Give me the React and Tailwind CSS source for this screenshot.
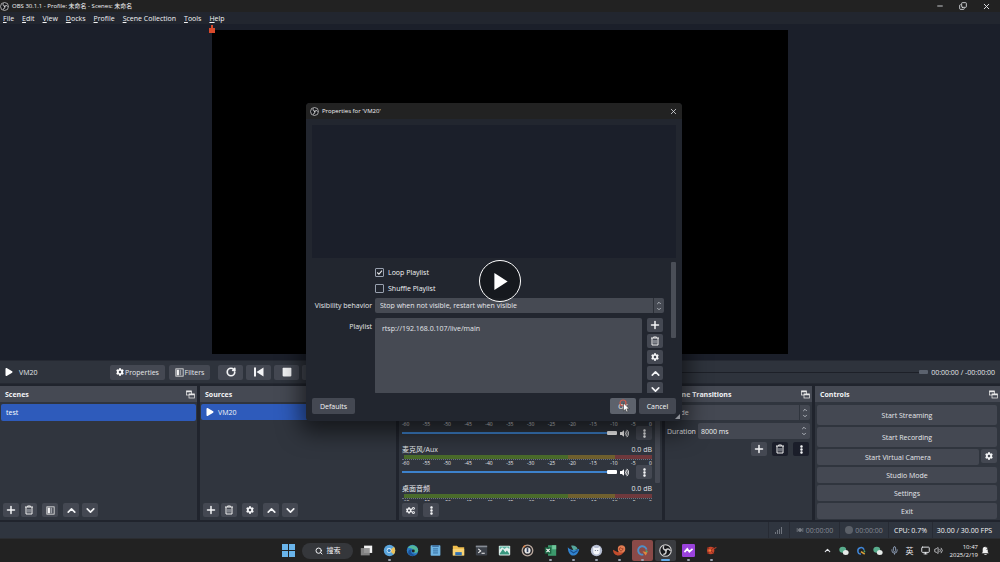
import { useState } from "react"
import clsx from "clsx"
import {
  ChevronDown,
  ChevronUp,
  Copy,
  Mic,
  Minus,
  Monitor,
  Plus,
  RotateCw,
  Search,
  Volume2,
  X,
} from "lucide-react"
import { FaCog, FaCogs, FaEllipsisV, FaPlay, FaStop, FaVolumeUp } from "react-icons/fa"

const MENUS = ["File", "Edit", "View", "Docks", "Profile", "Scene Collection", "Tools", "Help"]
const TICKS = [-60, -55, -50, -45, -40, -35, -30, -25, -20, -15, -10, -5, 0]

function ObsLogo({ className }) {
  return (
    <svg viewBox="0 0 24 24" className={className}>
      <circle cx="12" cy="12" r="10.6" fill="#17181c" stroke="#d4d4d4" strokeWidth="2" />
      <g fill="none" stroke="#cfcfcf" strokeWidth="2.6" strokeLinecap="round">
        <path d="M12.5 11.5C8.500 11 7 8 8.500 5" />
        <path d="M12.500 11.500c2.500-3 6-3 8 .2" />
        <path d="M12.500 11.500c1.500 3.500 0 6.800-3.500 7.500" />
      </g>
      <circle cx="12.500" cy="11.700" r="2" fill="#cfcfcf" />
    </svg>
  )
}

function FilterIcon({ className }) {
  return (
    <svg viewBox="0 0 16 16" className={className}>
      <rect x="1.500" y="1.500" width="13" height="13" fill="none" stroke="#e5e5e5" strokeWidth="1.500" />
      <rect x="3" y="3" width="4" height="10" fill="#f3f3f3" />
      <rect x="8" y="3" width="3" height="10" fill="#9a9da4" />
    </svg>
  )
}

function PopOutIcon() {
  return (
    <svg viewBox="0 0 18 18" className="h-[9px] w-[9px]" fill="none" stroke="#e8e8e8">
      <rect x="1" y="2" width="10" height="8" strokeWidth="1.500" />
      <path d="M1 3h10" strokeWidth="3" />
      <rect x="6" y="8" width="11" height="8" fill="#464a54" strokeWidth="1.500" />
      <path d="M6 9h11" strokeWidth="3" />
    </svg>
  )
}

function TrashIcon() {
  return (
    <svg viewBox="0 0 20 20" className="h-[10px] w-[10px]" fill="none" stroke="#f0f0f0" strokeWidth="2">
      <path d="M2 4h16M7 3.500V2h6v1.500" />
      <path d="M4 4v14h12V4" />
      <path d="M8 8v7M12 8v7" stroke="#b9bcc2" />
    </svg>
  )
}

function PrevIcon() {
  return (
    <svg viewBox="0 0 20 20" className="h-[10px] w-[10px]" fill="currentColor">
      <path d="M0 1h4v18H0zM19 1v18L5 10z" />
    </svg>
  )
}

function PlusIcon() {
  return <Plus className="h-3 w-3" strokeWidth={3} />
}

function UpIcon() {
  return <ChevronUp className="h-[13px] w-[13px]" strokeWidth={3} />
}

function DownIcon() {
  return <ChevronDown className="h-[13px] w-[13px]" strokeWidth={3} />
}

function ToolButton({ label, dark, className, children }) {
  return (
    <button
      aria-label={label}
      className={clsx(
        "flex h-[14px] w-4 shrink-0 items-center justify-center rounded-xs text-gray-100",
        dark ? "bg-[#1b1e2a]" : "bg-[#444852]",
        className
      )}
    >
      {children}
    </button>
  )
}

function Dock({ title, children }) {
  return (
    <section className="flex min-w-0 flex-col overflow-hidden bg-[#30353e]">
      <header className="flex h-4 shrink-0 items-center justify-between bg-[#454953] pr-[2px] pl-[5px]">
        <h2 className="font-bold whitespace-nowrap text-gray-100">{title}</h2>
        <button aria-label={`Undock ${title}`}>
          <PopOutIcon />
        </button>
      </header>
      {children}
    </section>
  )
}

function MixerChannel({ name }) {
  return (
    <div className="pb-[3px]">
      <div className="flex h-3 items-center justify-between text-gray-200">
        {name && (
          <>
            <span>{name}</span>
            <span>0.0 dB</span>
          </>
        )}
      </div>
      <div className="ml-[2px] flex h-1">
        <div className="w-[66%] bg-[#4a6b2b]" />
        <div className="w-[19%] bg-[#70602f]" />
        <div className="flex-1 bg-[#6f393d]" />
      </div>
      <div className="flex h-[6px] justify-between border-t border-dotted border-gray-500 text-[5px] leading-[6px] text-gray-200">
        {TICKS.map((t) => (
          <span key={t}>{t}</span>
        ))}
      </div>
      <div className="flex h-[14px] items-center">
        <div className="flex flex-1 items-center">
          <div className="h-[2px] flex-1 bg-[#3d82cc]" />
          <div className="h-1 w-[10px] rounded-[1px] bg-white" />
        </div>
        <button aria-label="Mute" className="ml-[3px] text-white">
          <FaVolumeUp className="h-[9px] w-[9px]" />
        </button>
        <ToolButton label="Channel options" className="ml-[7px]">
          <FaEllipsisV className="h-[9px] w-[9px]" />
        </ToolButton>
      </div>
    </div>
  )
}

function Spinner() {
  return (
    <span className="pointer-events-none flex flex-col items-center text-gray-300">
      <ChevronUp className="h-[6px] w-[6px]" strokeWidth={3} />
      <ChevronDown className="h-[6px] w-[6px]" strokeWidth={3} />
    </span>
  )
}

function PropertiesDialog() {
  const [loop, setLoop] = useState(true)
  const [shuffle, setShuffle] = useState(false)

  const options = [
    { id: "loop", label: "Loop Playlist", checked: loop, set: setLoop },
    { id: "shuffle", label: "Shuffle Playlist", checked: shuffle, set: setShuffle },
  ]

  return (
    <div
      role="dialog"
      aria-label="Properties for 'VM20'"
      className="absolute top-[103px] left-[306px] w-[376px] overflow-hidden rounded-sm bg-[#22262f] shadow-[0_6px_22px_6px_rgba(0,0,0,0.55)]"
    >
      <div className="flex h-4 items-center bg-[#222222] px-1 text-[6px] text-gray-100">
        <ObsLogo className="mr-[3px] h-[9px] w-[9px]" />
        <span className="flex-1">Properties for 'VM20'</span>
        <button aria-label="Close" className="text-gray-200">
          <X className="h-[9px] w-[9px]" strokeWidth={2} />
        </button>
      </div>

      <div className="mx-[6px] mt-[6px] h-[133px] bg-[#1b1f2a]" />

      {/* Scrolling form */}
      <div className="mx-[6px] flex h-[135px] justify-between overflow-hidden">
        <div className="grid w-[352px] grid-cols-[60px_1fr] content-start gap-x-[3px] pt-[6px]">
          {options.map((o) => (
            <label key={o.id} className="col-start-2 flex h-4 items-center gap-1 text-gray-100">
              <span className="relative flex">
                <input
                  type="checkbox"
                  checked={o.checked}
                  onChange={(e) => o.set(e.target.checked)}
                  className="peer h-[9px] w-[9px] appearance-none rounded-[1px] border border-gray-400"
                />
                <svg viewBox="0 0 8 8" className="pointer-events-none absolute inset-0 hidden h-[9px] w-[9px] peer-checked:block">
                  <path d="M2 4l1.500 1.500L6.200 2.400" fill="none" stroke="#e8e8e8" strokeWidth="1" />
                </svg>
              </span>
              {o.label}
            </label>
          ))}

          <label htmlFor="visibility" className="mt-[2px] flex h-[15px] items-center justify-end whitespace-nowrap text-gray-200">
            Visibility behavior
          </label>
          <div className="relative mt-[2px] flex h-[15px] rounded-xs bg-[#464a53]">
            <select id="visibility" className="h-full w-full appearance-none bg-transparent px-[5px] text-gray-200">
              <option>Stop when not visible, restart when visible</option>
            </select>
            <span className="pointer-events-none absolute inset-y-0 right-0 flex w-[11px] items-center justify-center border-l border-[#2c3038]">
              <Spinner />
            </span>
          </div>

          <span className="mt-[5px] flex h-4 items-center justify-end text-gray-200">Playlist</span>
          <div className="mt-[5px] flex justify-between">
            <ul className="h-[76px] w-[267px] rounded-xs bg-[#464a53] px-[7px] py-[6px] text-gray-200">
              <li className="leading-[10px]">rtsp://192.168.0.107/live/main</li>
            </ul>
            <div className="flex w-[17px] flex-col gap-[2px] pr-[1px]">
              <ToolButton label="Add">
                <PlusIcon />
              </ToolButton>
              <ToolButton label="Remove">
                <TrashIcon />
              </ToolButton>
              <ToolButton label="Edit">
                <FaCog className="h-2 w-2" />
              </ToolButton>
              <ToolButton label="Move up">
                <UpIcon />
              </ToolButton>
              <ToolButton label="Move down">
                <DownIcon />
              </ToolButton>
            </div>
          </div>
        </div>
        <div className="mt-1 h-[76px] w-[5px] rounded-[1px] bg-[#4a4e57]" />
      </div>

      <div className="flex gap-[3px] px-[6px] pt-[5px] pb-[7px] text-gray-100">
        <button className="mr-auto h-4 w-[43px] rounded-xs bg-[#444852]">Defaults</button>
        <button className="relative h-4 w-[26px] rounded-xs bg-[#5d626c]">
          OK
          <svg viewBox="0 0 14 14" className="absolute top-[1px] left-[8px] h-[14px] w-[14px]">
            <circle cx="5" cy="4" r="3" fill="none" stroke="#cf5a4b" strokeWidth="1.200" />
            <path d="M5.500 4v8l1.900-1.700 1.200 2.700 1.400-.6-1.200-2.600h2.500z" fill="#fff" stroke="#222" strokeWidth=".5" />
          </svg>
        </button>
        <button className="h-4 w-[37px] rounded-xs bg-[#444852]">Cancel</button>
      </div>
      <svg viewBox="0 0 6 6" className="absolute right-[2px] bottom-[2px] h-[5px] w-[5px]">
        <path d="M6 0v6H0z" fill="#8d9097" />
      </svg>
    </div>
  )
}

const WeChat = () => (
  <svg viewBox="0 0 16 16" className="h-[10px] w-[10px]">
    <ellipse cx="6" cy="6" rx="5.500" ry="4.800" fill="#58ac8c" />
    <ellipse cx="10.800" cy="10.300" rx="4.600" ry="4" fill="#e6ebe9" />
  </svg>
)

const TASKS = [
  {
    name: "Task View",
    art: (
      <>
        <rect x="5" y="2" width="10" height="9" fill="#f2f2f2" />
        <rect x="1" y="5" width="11" height="9" fill="#8c8c8c" opacity=".9" />
      </>
    ),
  },
  {
    name: "Browser",
    running: true,
    art: (
      <>
        <circle cx="8" cy="8" r="7" fill="#5aa5dc" />
        <path d="M8 8l5.500-4.500A7 7 0 0 1 13 13z" fill="#e9c25d" />
        <circle cx="7.500" cy="8" r="3" fill="#d9ecf7" />
        <circle cx="7.500" cy="8" r="2" fill="#2f7dc0" />
      </>
    ),
  },
  {
    name: "Edge",
    art: (
      <>
        <circle cx="8" cy="8" r="7" fill="#2c7cc4" />
        <path d="M2 5a7 7 0 0 1 13 3c0 3-4 3.500-5.500 2.500C11 8 8 4 2 5z" fill="#52b79b" />
        <path d="M7 7c-2 3 0 6.500 5 6.500A7 7 0 0 1 3 12c-1-3 1-6 4-5z" fill="#1b5298" />
        <circle cx="9" cy="8.500" r="1.800" fill="#222" />
      </>
    ),
  },
  {
    name: "Notepad",
    art: (
      <>
        <rect x="2" y="1.500" width="12" height="13" rx="1" fill="#6fb4e3" />
        <path d="M4 1.500h8v2H4z" fill="#38699a" />
        <path d="M5 6h6M5 8.500h6M5 11h6" stroke="#285f94" strokeWidth="1" />
      </>
    ),
  },
  {
    name: "File Explorer",
    art: (
      <>
        <path d="M1 2h5l2 2h7v10H1z" fill="#f0bd4d" />
        <path d="M1 6h14v8H1z" fill="#f8d375" />
        <path d="M4 14v-4h8v4z" fill="#2f70b5" />
      </>
    ),
  },
  {
    name: "Terminal",
    art: (
      <>
        <rect x="1" y="2" width="14" height="12" rx="1" fill="#3c4149" />
        <path d="M1 3h14" stroke="#878d95" strokeWidth="2" />
        <path d="M4 6l3 2.500L4 11M8 11.500h4" stroke="#f1f1f1" strokeWidth="1.300" fill="none" />
      </>
    ),
  },
  {
    name: "Photos",
    art: (
      <>
        <rect x="1" y="2" width="14" height="12" rx="1" fill="#e3f0ed" />
        <path d="M2 12l4-6 3 4 2-2 3 4v1H2z" fill="#39977f" />
        <path d="M2 3h12v3l-3-2-3 2-3-2-3 3z" fill="#5fb7a6" />
      </>
    ),
  },
  {
    name: "Player",
    art: (
      <>
        <circle cx="8" cy="8" r="6.500" fill="#2b2a2e" stroke="#b8a79c" strokeWidth="1.600" />
        <circle cx="8" cy="8" r="3.800" fill="#e8e8e8" />
        <path d="M8 5v5" stroke="#33415e" strokeWidth="2" />
        <path d="M3 4l2-2" stroke="#d77a40" strokeWidth="2" />
      </>
    ),
  },
  {
    name: "Excel",
    running: true,
    art: (
      <>
        <rect x="5" y="1.500" width="10" height="13" fill="#3c9a6d" />
        <path d="M10 1.500h5v5h-5z" fill="#6fc69b" />
        <rect x="1" y="4" width="8" height="8" fill="#1d6543" />
        <path d="M3 6l4 4M7 6l-4 4" stroke="#fff" strokeWidth="1.300" />
      </>
    ),
  },
  {
    name: "Thunderbird",
    running: true,
    art: (
      <>
        <path d="M1 4c4 5 9 3 14 2-1 6-5 9-9 8C3 13 1 9 1 4z" fill="#3183d0" />
        <path d="M5 2c4-1 7 1 8 4l-5 2z" fill="#55a79d" />
        <path d="M4 8l4 3 5-3" stroke="#174d8a" strokeWidth="1.400" fill="none" />
      </>
    ),
  },
  {
    name: "Cat",
    running: true,
    art: (
      <>
        <circle cx="8" cy="8" r="7" fill="#b7bfd3" />
        <path d="M4 3l2 2h4l2-2v6a4 4 0 0 1-8 0z" fill="#f5f7fb" />
        <path d="M6 8h1M9 8h1" stroke="#4d5872" strokeWidth="1.200" />
      </>
    ),
  },
  {
    name: "Snail",
    running: true,
    art: (
      <>
        <path d="M0 7c0 8 10 10 14 2L11 7 6 10z" fill="#c04c2d" />
        <circle cx="10.500" cy="6" r="4.600" fill="#e07b51" />
        <path d="M10 6c1-2-3-2-2 1s5 1 4-2" stroke="#8f321d" fill="none" strokeWidth="1" />
      </>
    ),
  },
  {
    name: "Recorder",
    running: true,
    tile: "bg-[#8a4a48]",
    art: (
      <>
        <path d="M9 13A5.200 5.200 0 1 1 13 7" fill="none" stroke="#4f8fc7" strokeWidth="2.300" />
        <path d="M8 9l6 1-2 4z" fill="#e2873c" />
        <path d="M12 8l2 2" stroke="#54a36f" strokeWidth="2" />
      </>
    ),
  },
  { name: "OBS", active: true, tile: "bg-[#3a3c40]", logo: true },
  {
    name: "Messenger",
    running: true,
    art: (
      <>
        <rect x="0" y="0" width="16" height="16" rx="1.500" fill="#9a42dc" />
        <path d="M3 10l3.500-4L9 9.500 13 6" fill="none" stroke="#fff" strokeWidth="2" />
      </>
    ),
  },
  {
    name: "VM",
    running: true,
    art: (
      <>
        <circle cx="7" cy="8" r="4.500" fill="#c8452b" />
        <path d="M3 4l8 8M11 4l-8 8" stroke="#8c2d1d" strokeWidth="1.200" />
        <circle cx="6" cy="8" r="1.500" fill="#f0813e" />
        <path d="M11 6l3-2" stroke="#a63c28" strokeWidth="1.400" />
      </>
    ),
  },
]

function Taskbar() {
  return (
    <footer className="grid h-6 shrink-0 grid-cols-[1fr_auto_1fr] items-center border-t border-[#2b2d31] bg-[#222222]">
      <span />
      <nav className="flex items-center gap-[2px]">
        <button aria-label="Start" className="flex w-[21px] justify-center">
          <svg viewBox="0 0 13 13" className="h-[13px] w-[13px]" fill="#69b4ea">
            <path d="M0 0h6v6H0zM7 0h6v6H7zM0 7h6v6H0zM7 7h6v6H7z" />
          </svg>
        </button>
        <button className="mx-[1px] flex h-4 w-[51px] items-center justify-center gap-1 rounded-full bg-[#35373b] text-[7px] text-gray-100">
          <Search className="h-2 w-2" strokeWidth={3} />
          搜索
        </button>
        {TASKS.map((t) => (
          <button
            key={t.name}
            aria-label={t.name}
            className={clsx("relative flex h-[21px] w-[21px] items-center justify-center rounded-xs", t.tile)}
          >
            {t.logo ? (
              <ObsLogo className="h-[13px] w-[13px]" />
            ) : (
              <svg viewBox="0 0 16 16" className="h-[13px] w-[13px]">
                {t.art}
              </svg>
            )}
            {t.running && <span className="absolute bottom-0 h-[2px] w-[3px] rounded-full bg-gray-400" />}
            {t.active && <span className="absolute bottom-0 h-[2px] w-[9px] rounded-full bg-[#62abe8]" />}
          </button>
        ))}
      </nav>
      <div className="flex items-center justify-end gap-[7px] pr-[10px] text-gray-200">
        <ChevronUp className="h-[9px] w-[9px]" strokeWidth={3} />
        <WeChat />
        <svg viewBox="0 0 16 16" className="h-[10px] w-[10px]" fill="none" strokeWidth="2.400">
          <path d="M8 13A5.200 5.200 0 1 1 13 6" stroke="#3f86d8" />
          <path d="M8 9l6 4" stroke="#e0a33c" />
          <path d="M13 7l1 3" stroke="#4ea36b" />
        </svg>
        <WeChat />
        <Mic className="h-[9px] w-[9px] text-[#8d9db5]" strokeWidth={2.5} />
        <span className="text-[8px]">英</span>
        <span className="flex gap-1">
          <Monitor className="h-[9px] w-[9px]" strokeWidth={2.5} />
          <Volume2 className="h-[9px] w-[9px]" strokeWidth={2} />
        </span>
        <span className="flex items-center gap-[3px]">
          <span className="text-right text-[6px] leading-[8px] text-gray-100">
            10:47
            <br />
            2025/2/19
          </span>
          <svg viewBox="0 0 16 16" className="h-[9px] w-[9px]" fill="#f1f1f1">
            <path d="M3 11V6a4.500 4.500 0 0 1 9 0v5l2 2H1zM6 14h4v1.500H6z" />
            <path d="M8 2h5v1L10 6h3" fill="none" stroke="#333" strokeWidth="1.200" />
          </svg>
        </span>
      </div>
    </footer>
  )
}

export default function App() {
  return (
    <div className="relative flex min-h-screen flex-col overflow-hidden bg-[#20242d] font-['Open_Sans','Noto_Sans_CJK_SC',sans-serif] text-[7px] leading-none text-gray-200">
      <header className="flex h-3 shrink-0 items-center bg-[#222222] pr-[9px]">
        <ObsLogo className="mr-[3px] h-[9px] w-[9px]" />
        <h1 className="flex-1 text-[6px] text-gray-100">OBS 30.1.1 - Profile: 未命名 - Scenes: 未命名</h1>
        <div className="flex items-center gap-[15px] text-gray-200">
          <button aria-label="Minimize">
            <Minus className="h-2 w-2" strokeWidth={2.5} />
          </button>
          <button aria-label="Restore">
            <Copy className="h-2 w-2 -scale-y-100" strokeWidth={2.5} />
          </button>
          <button aria-label="Close">
            <X className="h-[9px] w-[9px]" strokeWidth={2.5} />
          </button>
        </div>
      </header>

      <nav className="flex h-3 shrink-0 items-center gap-2 bg-[#22262f] px-[3px] text-gray-100">
        {MENUS.map((m) => (
          <button key={m} className="whitespace-nowrap">
            <span className="underline">{m[0]}</span>
            {m.slice(1)}
          </button>
        ))}
      </nav>

      {/* Preview canvas */}
      <main className="flex flex-1 items-center justify-center bg-[#1b1f2a]">
        <div className="relative aspect-video w-[57.6%] bg-black">
          <svg viewBox="0 0 6 8" className="absolute -top-[5px] -left-[3px] h-2 w-[6px]" fill="#d9492b">
            <path d="M0 3h2V0h2v3h2v5H0z" />
          </svg>
        </div>
      </main>

      {/* Media controls */}
      <div className="flex h-6 shrink-0 items-center border-y border-[#252932] bg-[#2e333c] pr-[5px] pl-[5px]">
        <FaPlay className="h-2 w-2 text-white" />
        <span className="ml-[6px] w-[91px]">VM20</span>
        <button className="flex h-[15px] w-[55px] items-center justify-center gap-[1px] rounded-xs bg-[#444852]">
          <FaCog className="h-2 w-2 text-white" />
          Properties
        </button>
        <button className="ml-1 flex h-[15px] w-[41px] items-center justify-center gap-[1px] rounded-xs bg-[#444852]">
          <FilterIcon className="h-[9px] w-[9px]" />
          Filters
        </button>
        <div className="ml-2 flex gap-[3px]">
          <ToolButton label="Restart" className="h-[15px] w-[25px]">
            <RotateCw className="h-[10px] w-[10px]" strokeWidth={4} />
          </ToolButton>
          <ToolButton label="Previous" className="h-[15px] w-[25px]">
            <PrevIcon />
          </ToolButton>
          <ToolButton label="Stop" className="h-[15px] w-[25px]">
            <FaStop className="h-[10px] w-[10px]" />
          </ToolButton>
          <ToolButton label="Next" className="h-[15px] w-[25px] [&>svg]:rotate-180">
            <PrevIcon />
          </ToolButton>
        </div>
        <div className="ml-3 flex flex-1 items-center">
          <div className="h-px flex-1 bg-[#1d2028]" />
          <div className="h-1 w-[9px] rounded-[1px] bg-[#5b626e]" />
        </div>
        <span className="ml-[3px]">00:00:00 / -00:00:00</span>
      </div>

      {/* Docks */}
      <div className="mt-[2px] grid h-[134px] shrink-0 grid-cols-[197fr_196fr_263fr_147fr_185fr] gap-[3px]">
        <Dock title="Scenes">
          <ul className="flex-1 px-[1px] pt-[2px]">
            <li className="flex h-[17px] items-center rounded-xs bg-[#2e5bbb] px-[5px] text-white">test</li>
          </ul>
          <div className="flex px-[3px] pb-[3px]">
            <ToolButton label="Add scene">
              <PlusIcon />
            </ToolButton>
            <ToolButton label="Remove scene" className="ml-[2px]">
              <TrashIcon />
            </ToolButton>
            <ToolButton label="Scene filters" className="ml-[5px]">
              <FilterIcon className="h-[9px] w-[9px]" />
            </ToolButton>
            <ToolButton label="Move scene up" className="ml-[5px]">
              <UpIcon />
            </ToolButton>
            <ToolButton label="Move scene down" className="ml-[3px]">
              <DownIcon />
            </ToolButton>
          </div>
        </Dock>

        <Dock title="Sources">
          <ul className="flex-1 px-[1px] pt-[2px]">
            <li className="flex h-4 items-center gap-1 rounded-xs bg-[#2e5bbb] px-[5px] text-gray-100">
              <FaPlay className="h-2 w-2 text-white" />
              VM20
            </li>
          </ul>
          <div className="flex px-[3px] pb-[3px]">
            <ToolButton label="Add source">
              <PlusIcon />
            </ToolButton>
            <ToolButton label="Remove source" className="ml-[2px]">
              <TrashIcon />
            </ToolButton>
            <ToolButton label="Source properties" className="ml-[5px]">
              <FaCog className="h-2 w-2" />
            </ToolButton>
            <ToolButton label="Move source up" className="ml-[5px]">
              <UpIcon />
            </ToolButton>
            <ToolButton label="Move source down" className="ml-[3px]">
              <DownIcon />
            </ToolButton>
          </div>
        </Dock>

        <Dock title="Audio Mixer">
          <div className="flex h-[99px] shrink-0 gap-[3px] overflow-hidden pl-[3px]">
            <div className="flex-1 pt-[2px]">
              <MixerChannel />
              <MixerChannel name="麦克风/Aux" />
              <MixerChannel name="桌面音频" />
            </div>
            <div className="mr-[2px] h-[81px] w-[5px] rounded-[1px] bg-[#454953]" />
          </div>
          <div className="mt-auto flex gap-[5px] px-[3px] pb-[3px]">
            <ToolButton label="Advanced audio properties">
              <FaCogs className="h-[9px] w-[9px]" />
            </ToolButton>
            <ToolButton label="Mixer menu">
              <FaEllipsisV className="h-[9px] w-[9px]" />
            </ToolButton>
          </div>
        </Dock>

        <Dock title="Scene Transitions">
          <div className="flex flex-col gap-[3px] px-[2px] pt-[3px]">
            <div className="relative flex h-[15px] rounded-xs bg-[#444852]">
              <select aria-label="Transition" className="h-full w-full appearance-none bg-transparent px-[6px]">
                <option>Fade</option>
              </select>
              <span className="pointer-events-none absolute inset-y-0 right-0 flex w-[11px] items-center justify-center border-l border-[#30353e]">
                <Spinner />
              </span>
            </div>
            <div className="flex items-center gap-[2px]">
              <label htmlFor="duration">Duration</label>
              <div className="flex h-4 min-w-0 flex-1 items-center rounded-xs bg-[#444852] pr-[3px]">
                <input id="duration" defaultValue="8000 ms" className="w-full min-w-0 bg-transparent px-[3px] text-gray-100" />
                <Spinner />
              </div>
            </div>
            <div className="flex justify-end gap-[5px] pr-[1px]">
              <ToolButton label="Add transition">
                <PlusIcon />
              </ToolButton>
              <ToolButton label="Remove transition" dark>
                <TrashIcon />
              </ToolButton>
              <ToolButton label="Transition menu" dark>
                <FaEllipsisV className="h-[9px] w-[9px]" />
              </ToolButton>
            </div>
          </div>
        </Dock>

        <Dock title="Controls">
          <div className="flex flex-col gap-[2px] pt-[3px] pr-[3px] pl-[2px] text-gray-200">
            <button className="h-5 rounded-xs bg-[#444852]">Start Streaming</button>
            <button className="h-5 rounded-xs bg-[#444852]">Start Recording</button>
            <div className="flex gap-[2px]">
              <button className="h-4 flex-1 rounded-xs bg-[#444852]">Start Virtual Camera</button>
              <ToolButton label="Virtual camera settings" className="h-4">
                <FaCog className="h-2 w-2" />
              </ToolButton>
            </div>
            <button className="h-4 rounded-xs bg-[#444852]">Studio Mode</button>
            <button className="h-4 rounded-xs bg-[#444852]">Settings</button>
            <button className="h-4 rounded-xs bg-[#444852]">Exit</button>
          </div>
        </Dock>
      </div>

      {/* Status bar */}
      <div className="mt-[2px] flex h-4 shrink-0 items-stretch justify-end bg-[#2f353f] text-gray-100 *:flex *:items-center *:justify-center *:border-l *:border-[#272b34]">
        <div className="w-[21px]">
          <svg viewBox="0 0 10 10" className="h-[10px] w-[10px]" fill="#70757e">
            <path d="M1 7h1v2H1zM3 5h1v4H3zM5 4h1v5H5zM7 2h1v7H7z" />
          </svg>
        </div>
        <div className="w-[50px] gap-[2px] text-[#858a93]">
          <svg viewBox="0 0 10 10" className="h-2 w-2" fill="none" stroke="#777c84">
            <circle cx="5" cy="5" r="2" fill="#777c84" />
            <path d="M1.500 2.500v5M8.500 2.500v5" />
          </svg>
          00:00:00
        </div>
        <div className="w-[49px] gap-[2px] text-[#858a93]">
          <span className="h-2 w-2 rounded-full bg-[#5b6068]" />
          00:00:00
        </div>
        <div className="w-[44px]">CPU: 0.7%</div>
        <div className="w-[68px] pr-1">30.00 / 30.00 FPS</div>
      </div>

      <Taskbar />
      <PropertiesDialog />

      <button
        aria-label="Play"
        className="absolute top-1/2 left-1/2 flex h-[42px] w-[42px] -translate-1/2 items-center justify-center rounded-full border border-white bg-[#15181d]/90"
      >
        <svg viewBox="0 0 14 18" className="ml-[2px] h-[17px] w-[14px]" fill="#fff">
          <path d="M0 0l14 9-14 9z" />
        </svg>
      </button>
    </div>
  )
}
